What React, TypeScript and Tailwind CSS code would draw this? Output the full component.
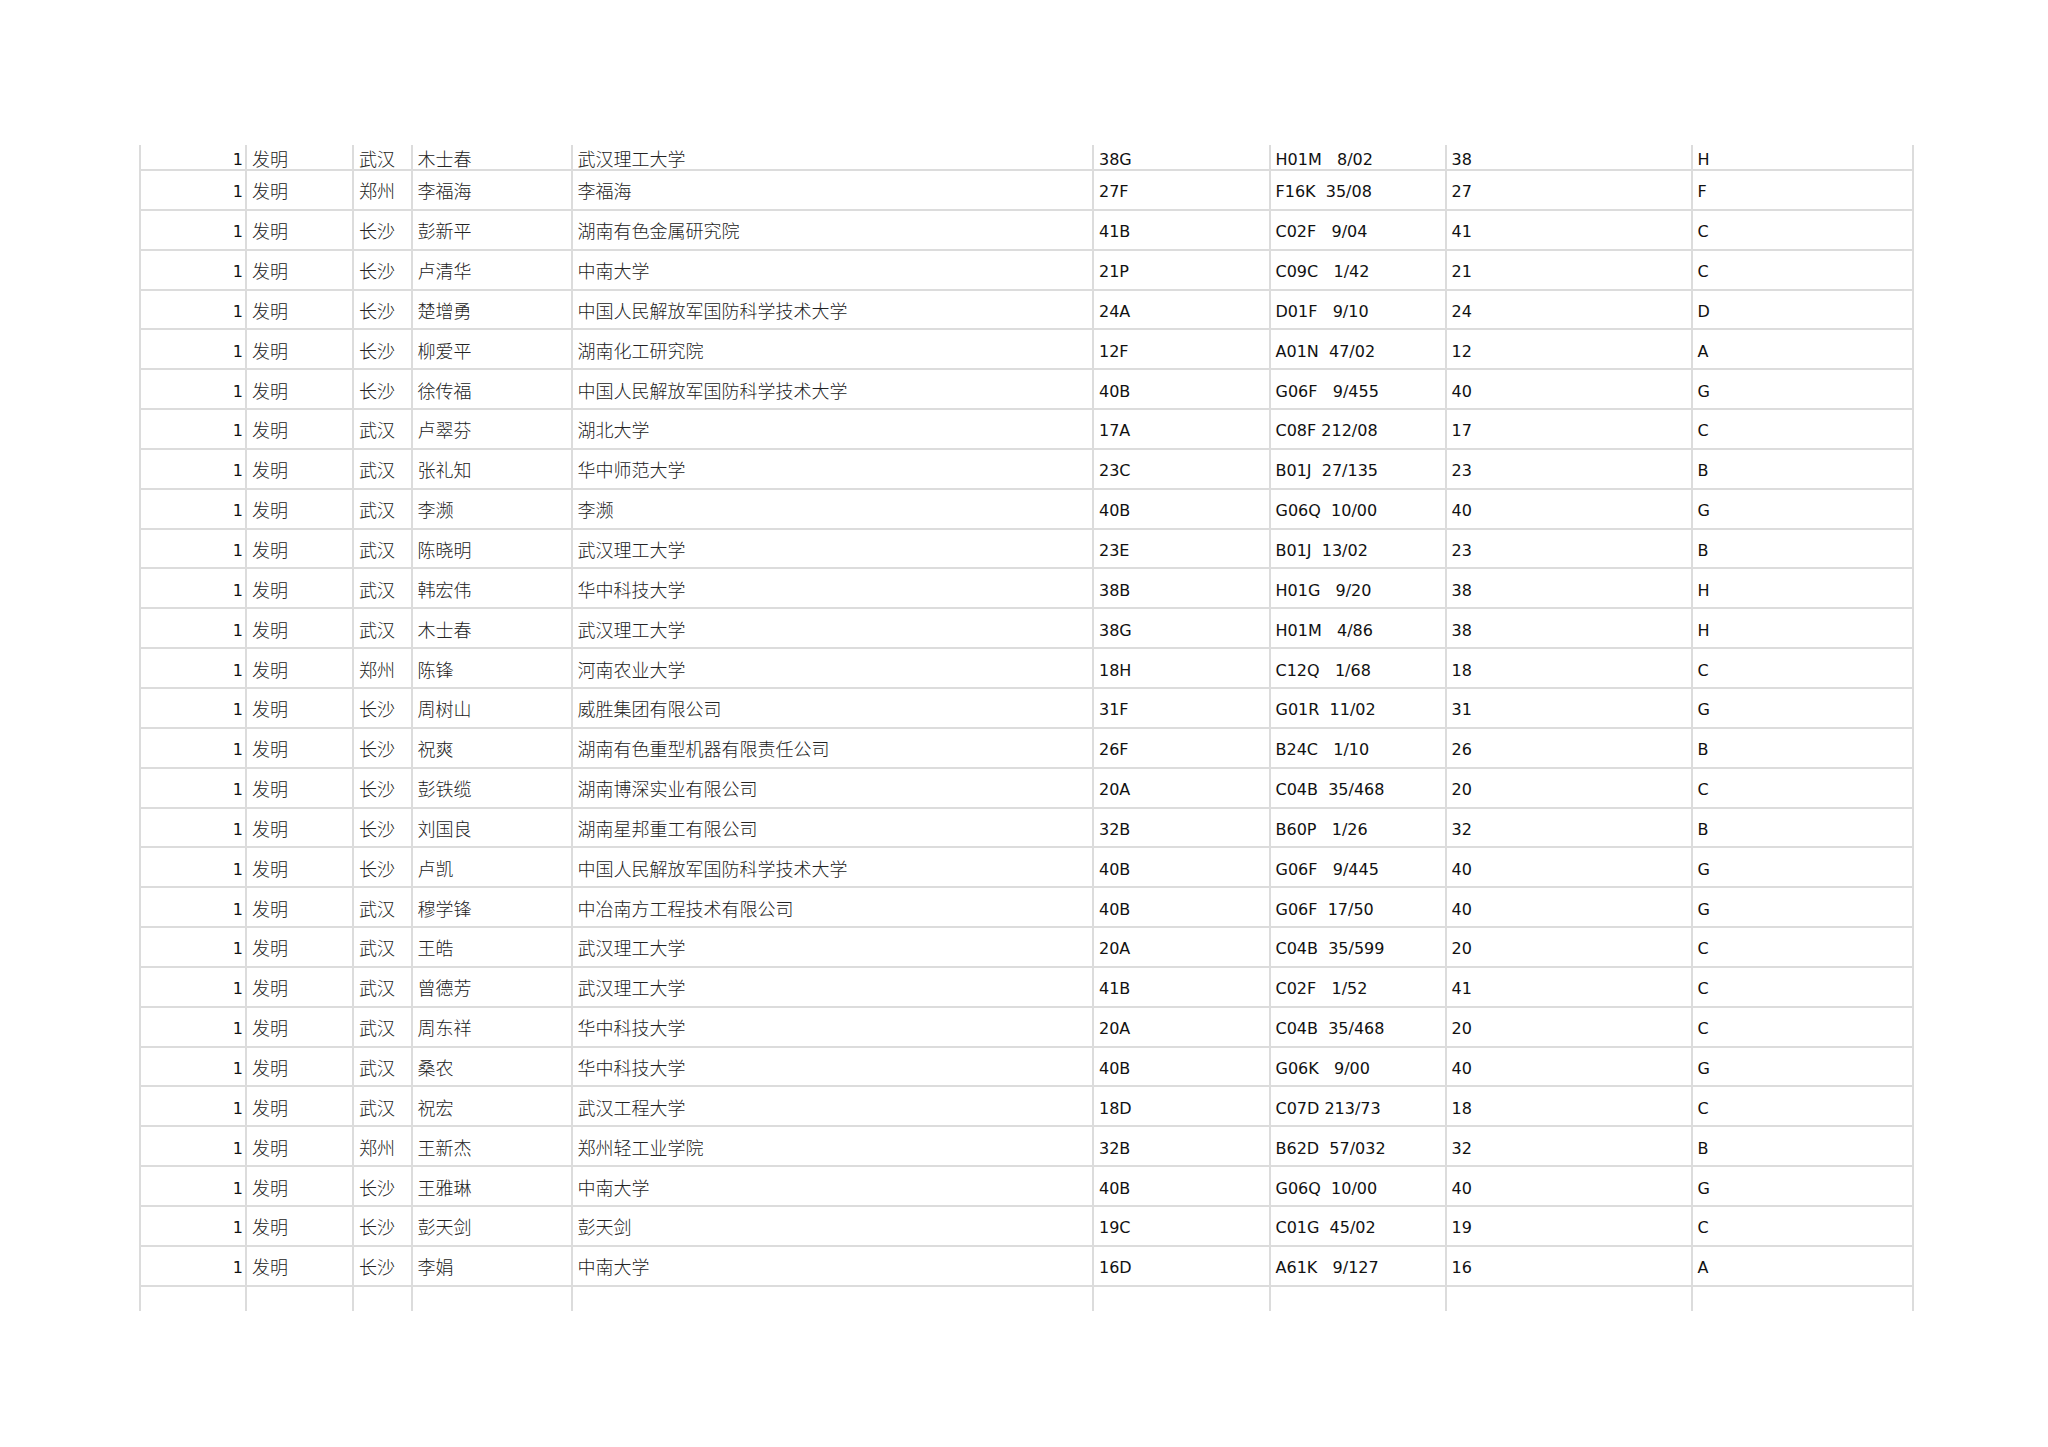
import React from "react";

type Row = [string, string, string, string, string, string, string];

const rows: Row[] = [
  ["武汉", "木士春", "武汉理工大学", "38G", "H01M   8/02", "38", "H"],
  ["郑州", "李福海", "李福海", "27F", "F16K  35/08", "27", "F"],
  ["长沙", "彭新平", "湖南有色金属研究院", "41B", "C02F   9/04", "41", "C"],
  ["长沙", "卢清华", "中南大学", "21P", "C09C   1/42", "21", "C"],
  ["长沙", "楚增勇", "中国人民解放军国防科学技术大学", "24A", "D01F   9/10", "24", "D"],
  ["长沙", "柳爱平", "湖南化工研究院", "12F", "A01N  47/02", "12", "A"],
  ["长沙", "徐传福", "中国人民解放军国防科学技术大学", "40B", "G06F   9/455", "40", "G"],
  ["武汉", "卢翠芬", "湖北大学", "17A", "C08F 212/08", "17", "C"],
  ["武汉", "张礼知", "华中师范大学", "23C", "B01J  27/135", "23", "B"],
  ["武汉", "李濒", "李濒", "40B", "G06Q  10/00", "40", "G"],
  ["武汉", "陈晓明", "武汉理工大学", "23E", "B01J  13/02", "23", "B"],
  ["武汉", "韩宏伟", "华中科技大学", "38B", "H01G   9/20", "38", "H"],
  ["武汉", "木士春", "武汉理工大学", "38G", "H01M   4/86", "38", "H"],
  ["郑州", "陈锋", "河南农业大学", "18H", "C12Q   1/68", "18", "C"],
  ["长沙", "周树山", "威胜集团有限公司", "31F", "G01R  11/02", "31", "G"],
  ["长沙", "祝爽", "湖南有色重型机器有限责任公司", "26F", "B24C   1/10", "26", "B"],
  ["长沙", "彭铁缆", "湖南博深实业有限公司", "20A", "C04B  35/468", "20", "C"],
  ["长沙", "刘国良", "湖南星邦重工有限公司", "32B", "B60P   1/26", "32", "B"],
  ["长沙", "卢凯", "中国人民解放军国防科学技术大学", "40B", "G06F   9/445", "40", "G"],
  ["武汉", "穆学锋", "中冶南方工程技术有限公司", "40B", "G06F  17/50", "40", "G"],
  ["武汉", "王皓", "武汉理工大学", "20A", "C04B  35/599", "20", "C"],
  ["武汉", "曾德芳", "武汉理工大学", "41B", "C02F   1/52", "41", "C"],
  ["武汉", "周东祥", "华中科技大学", "20A", "C04B  35/468", "20", "C"],
  ["武汉", "桑农", "华中科技大学", "40B", "G06K   9/00", "40", "G"],
  ["武汉", "祝宏", "武汉工程大学", "18D", "C07D 213/73", "18", "C"],
  ["郑州", "王新杰", "郑州轻工业学院", "32B", "B62D  57/032", "32", "B"],
  ["长沙", "王雅琳", "中南大学", "40B", "G06Q  10/00", "40", "G"],
  ["长沙", "彭天剑", "彭天剑", "19C", "C01G  45/02", "19", "C"],
  ["长沙", "李娟", "中南大学", "16D", "A61K   9/127", "16", "A"],
];

const gridCols =
  "grid grid-cols-[106px_107px_58.5px_160px_521.5px_176.5px_176px_246px_221.5px]";

const cellBase = "border-r-2 border-[#dcdcdc] flex items-center overflow-hidden whitespace-pre";
const lat = "font-['DejaVu_Sans',sans-serif] text-[16px] text-[#111111] pl-[5px] pt-[5px]";
const cjk = "font-['Noto_Sans_CJK_SC',sans-serif] text-[18px] text-[#222222] font-light pl-[5px] pt-[2px]";

function DataRow({ r, first }: { r: Row; first: boolean }) {
  const h = first ? "h-[26px]" : "h-[39.85px]";
  const c = `${cellBase} border-b-2 ${h}`;
  return (
    <div className={gridCols}>
      <div className={`${c} justify-end font-['DejaVu_Sans',sans-serif] text-[16px] text-[#111111] pr-[2px] pt-[5px]`}>1</div>
      <div className={`${c} ${cjk}`}>发明</div>
      <div className={`${c} ${cjk}`}>{r[0]}</div>
      <div className={`${c} ${cjk}`}>{r[1]}</div>
      <div className={`${c} ${cjk}`}>{r[2]}</div>
      <div className={`${c} ${lat}`}>{r[3]}</div>
      <div className={`${c} ${lat}`}>{r[4]}</div>
      <div className={`${c} ${lat}`}>{r[5]}</div>
      <div className={`${c} ${lat}`}>{r[6]}</div>
    </div>
  );
}

export default function App() {
  return (
    <div className="w-[2048px] h-[1447px] bg-white overflow-hidden pt-[145px] pl-[139px]">
      <div className="w-[1777px] border-l-2 border-[#dcdcdc]">
        {rows.map((r, i) => (
          <DataRow key={i} r={r} first={i === 0} />
        ))}
        <div className={gridCols}>
          {Array.from({ length: 9 }).map((_, i) => (
            <div key={i} className={`${cellBase} h-[24px]`} />
          ))}
        </div>
      </div>
    </div>
  );
}
